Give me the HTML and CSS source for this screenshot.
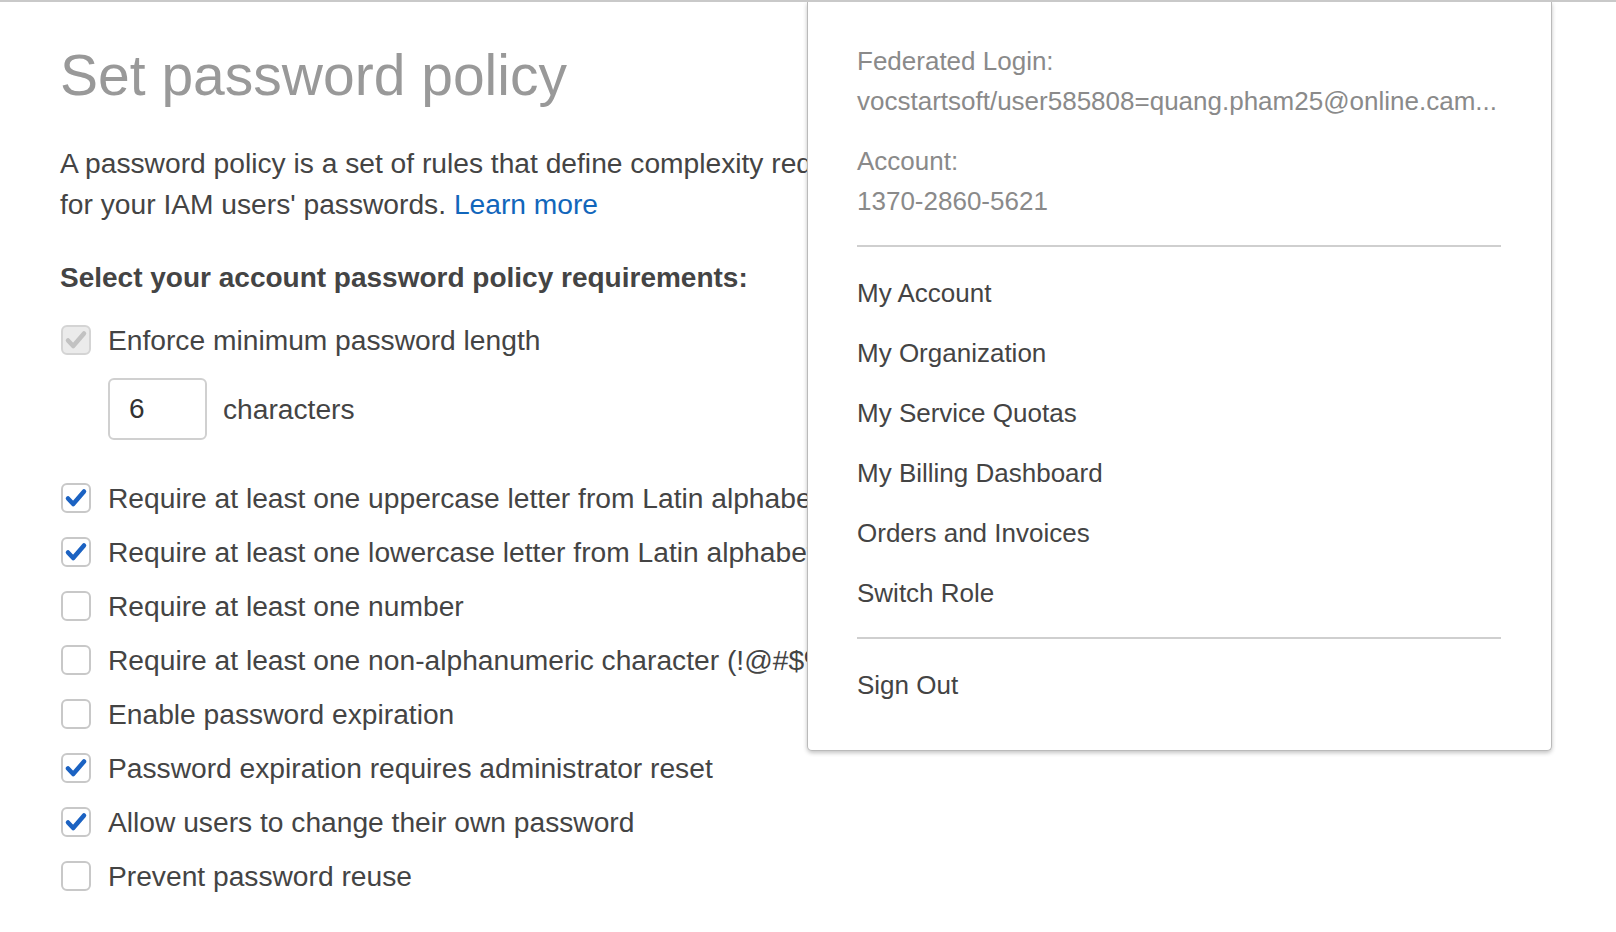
FILE: index.html
```html
<!DOCTYPE html>
<html lang="en">
<head>
<meta charset="utf-8">
<title>Set password policy</title>
<link rel="stylesheet" href="styles.css">
</head>
<body>
<div class="topbar"></div>
<main class="page">
  <h1 class="title">Set password policy</h1>
  <p class="intro">A password policy is a set of rules that define complexity requirements<br>for your IAM users' passwords. <a class="link" href="#">Learn more</a></p>
  <h2 class="section">Select your account password policy requirements:</h2>

  <div class="row row-first">
    <span class="box box-disabled"><svg viewBox="0 0 30 30" width="30" height="30"><path d="M7 15.5 L12.2 21 L23 8.5" fill="none" stroke="#c2c2c2" stroke-width="4.5" stroke-linecap="round" stroke-linejoin="round"/></svg></span>
    <span class="label">Enforce minimum password length</span>
  </div>
  <div class="length-row">
    <span class="num-input">6</span>
    <span class="label">characters</span>
  </div>

  <div class="list">
    <div class="row">
      <span class="box"><svg viewBox="0 0 30 30" width="30" height="30"><path d="M7 15.5 L12.2 21 L23 8.5" fill="none" stroke="#1b62c2" stroke-width="4.5" stroke-linecap="round" stroke-linejoin="round"/></svg></span>
      <span class="label">Require at least one uppercase letter from Latin alphabet (A-Z)</span>
    </div>
    <div class="row">
      <span class="box"><svg viewBox="0 0 30 30" width="30" height="30"><path d="M7 15.5 L12.2 21 L23 8.5" fill="none" stroke="#1b62c2" stroke-width="4.5" stroke-linecap="round" stroke-linejoin="round"/></svg></span>
      <span class="label">Require at least one lowercase letter from Latin alphabet (a-z)</span>
    </div>
    <div class="row">
      <span class="box"></span>
      <span class="label">Require at least one number</span>
    </div>
    <div class="row">
      <span class="box"></span>
      <span class="label">Require at least one non-alphanumeric character (!@#$%^&amp;*()_+-=[]{}|')</span>
    </div>
    <div class="row">
      <span class="box"></span>
      <span class="label">Enable password expiration</span>
    </div>
    <div class="row">
      <span class="box"><svg viewBox="0 0 30 30" width="30" height="30"><path d="M7 15.5 L12.2 21 L23 8.5" fill="none" stroke="#1b62c2" stroke-width="4.5" stroke-linecap="round" stroke-linejoin="round"/></svg></span>
      <span class="label">Password expiration requires administrator reset</span>
    </div>
    <div class="row">
      <span class="box"><svg viewBox="0 0 30 30" width="30" height="30"><path d="M7 15.5 L12.2 21 L23 8.5" fill="none" stroke="#1b62c2" stroke-width="4.5" stroke-linecap="round" stroke-linejoin="round"/></svg></span>
      <span class="label">Allow users to change their own password</span>
    </div>
    <div class="row">
      <span class="box"></span>
      <span class="label">Prevent password reuse</span>
    </div>
  </div>
</main>

<div class="menu">
  <div class="info">
    <div class="info-key">Federated Login:</div>
    <div class="info-val">vocstartsoft/user585808=quang.pham25@online.cam...</div>
    <div class="info-key info-gap">Account:</div>
    <div class="info-val">1370-2860-5621</div>
  </div>
  <div class="divider divider-top"></div>
  <ul class="items">
    <li class="item">My Account</li>
    <li class="item">My Organization</li>
    <li class="item">My Service Quotas</li>
    <li class="item">My Billing Dashboard</li>
    <li class="item">Orders and Invoices</li>
    <li class="item">Switch Role</li>
  </ul>
  <div class="divider divider-bottom"></div>
  <div class="item">Sign Out</div>
</div>
</body>
</html>
```

FILE: styles.css
```css
html, body {
  margin: 0;
  padding: 0;
  background: #ffffff;
}
body {
  font-family: "Liberation Sans", Arial, sans-serif;
  color: #444444;
  width: 1616px;
  height: 932px;
  overflow: hidden;
  position: relative;
}
.topbar {
  height: 2px;
  background: #c9c9c9;
  position: relative;
  z-index: 5;
}
.page {
  box-sizing: border-box;
  width: 807px;
  height: 930px;
  overflow: hidden;
  padding: 41px 0 0 60px;
}
.title {
  margin: 0;
  font-weight: normal;
  font-size: 57px;
  line-height: 64px;
  color: #999999;
  white-space: nowrap;
}
.intro {
  margin: 36px 0 0 0;
  font-size: 28.2px;
  line-height: 41px;
  white-space: nowrap;
}
.link {
  color: #1166bb;
  text-decoration: none;
}
.section {
  margin: 38px 0 0 0;
  font-size: 28px;
  line-height: 30px;
  font-weight: bold;
  color: #444444;
  white-space: nowrap;
}
.row {
  display: flex;
  align-items: center;
  height: 54px;
  white-space: nowrap;
}
.row-first {
  margin-top: 20px;
}
.box {
  flex: none;
  box-sizing: border-box;
  width: 30px;
  height: 30px;
  margin-left: 1px;
  border: 2px solid #c8c8c8;
  border-radius: 6px;
  background: #ffffff;
  display: flex;
  align-items: center;
  justify-content: center;
  overflow: hidden;
}
.box svg {
  flex: none;
}
.box-disabled {
  background: #ebebeb;
  border-color: #d4d4d4;
}
.label {
  margin-left: 17px;
  font-size: 28.2px;
  line-height: 54px;
  color: #444444;
}
.length-row {
  display: flex;
  align-items: center;
  margin: 11px 0 0 48px;
}
.num-input {
  box-sizing: border-box;
  width: 99px;
  height: 62px;
  border: 2px solid #d0d0d0;
  border-radius: 6px;
  padding-left: 19px;
  font-size: 28px;
  line-height: 58px;
  color: #333333;
}
.length-row .label {
  margin-left: 16px;
}
.list {
  margin-top: 31px;
}
.menu {
  position: absolute;
  top: 2px;
  left: 807px;
  width: 745px;
  box-sizing: border-box;
  padding: 39px 50px 35px 49px;
  background: #ffffff;
  border: 1px solid #bababa;
  border-top: none;
  border-radius: 0 0 5px 5px;
  box-shadow: 0 2px 4px rgba(0, 0, 0, 0.24);
  z-index: 4;
  font-size: 26px;
}
.info {
  line-height: 40px;
  color: #8a8a8a;
  white-space: nowrap;
}
.info-gap {
  margin-top: 20px;
}
.divider {
  height: 2px;
  background: #cfcfcf;
}
.divider-top {
  margin: 24px 0 16px 0;
}
.divider-bottom {
  margin: 14px 0 16px 0;
}
.items {
  list-style: none;
  margin: 0;
  padding: 0;
}
.item {
  line-height: 60px;
  color: #444444;
}
```
